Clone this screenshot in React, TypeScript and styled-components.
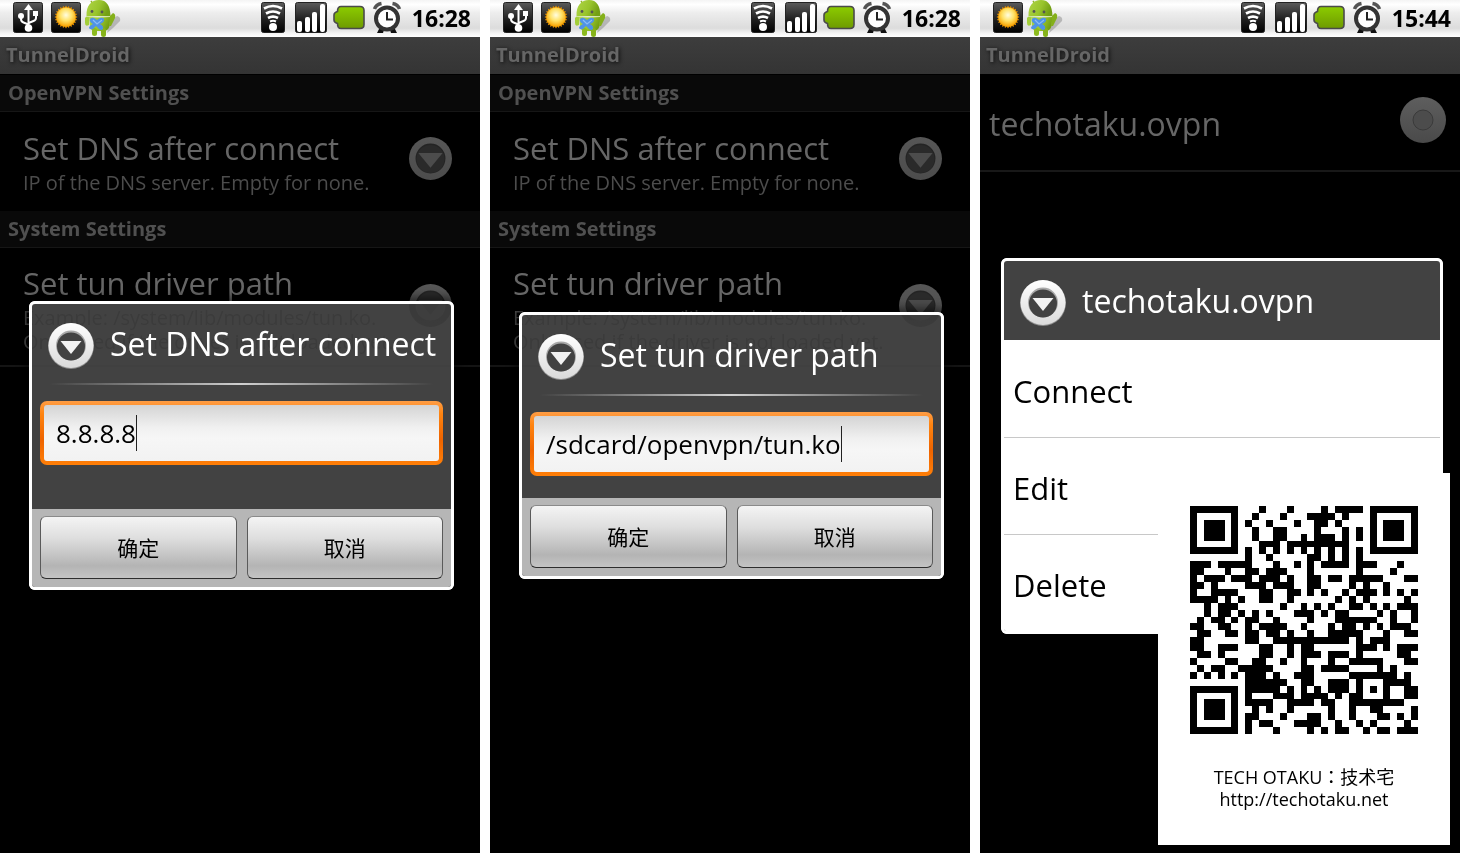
import React, { useId, useState } from 'react';
import styled, { createGlobalStyle } from 'styled-components';

const GlobalStyle = createGlobalStyle`
  * { box-sizing: border-box; }
  body {
    margin: 0;
    background: #fff;
    font-family: 'Open Sans', 'Noto Sans', 'Noto Sans CJK SC', sans-serif;
  }
  button, input { font: inherit; }
  svg { display: block; flex: none; }
`;

/* ---------- layout ---------- */

const Gallery = styled.main`
  display: grid;
  grid-template-columns: repeat(3, minmax(0, 1fr));
  gap: 10px;
  min-height: calc(100vh - 1px);
`;

const Phone = styled.section`
  position: relative;
  display: flex;
  flex-direction: column;
  overflow: hidden;
  background: #000;
`;

const StatusBar = styled.header`
  display: flex;
  justify-content: space-between;
  height: 37px;
  padding: 0 9px 0 13px;
  background: linear-gradient(#f4f4f4 0%, #fff 12%, #ededed 35%, #dcdcdc 76%, #f4f4f4 90%, #fff 100%);
`;

const StatusGroup = styled.div<{ $gap: number }>`
  display: flex;
  gap: ${(p) => p.$gap}px;
`;

const Clock = styled.time`
  font-size: 23px;
  line-height: 37px;
  font-weight: 700;
  color: #000;
`;

const TitleBar = styled.h1`
  margin: 0;
  padding: 0 6px;
  height: 37px;
  background: linear-gradient(#3d3d3d, #343434);
  color: #666;
  font-size: 20px;
  line-height: 36px;
  font-weight: 700;
  text-shadow: 1px 1px 4px rgba(0, 0, 0, 0.8);
`;

const SettingsList = styled.div`
  padding-top: 1px;
`;

const SectionHeader = styled.h2`
  margin: 0;
  padding: 0 8px;
  height: 37px;
  border-bottom: 1px solid #161616;
  background: #090909;
  color: #505050;
  font-size: 20px;
  line-height: 36px;
  font-weight: 700;
`;

const Preference = styled.div<{ $divided?: boolean }>`
  display: flex;
  align-items: center;
  justify-content: space-between;
  padding: ${(p) => (p.$divided ? 15 : 16)}px 28px 11px 23px;
  border-bottom: ${(p) => (p.$divided ? '2px solid #141414' : '5px solid #000')};

  svg { margin-bottom: 6px; }
`;

const PreferenceTitle = styled.h3`
  margin: 0 0 3px;
  color: #666;
  font-size: 31px;
  line-height: 40px;
  font-weight: 400;
`;

const PreferenceSummary = styled.p`
  margin: 0;
  color: #4c4c4c;
  font-size: 20px;
  line-height: 24px;
`;

const ProfileRow = styled.div`
  display: flex;
  align-items: center;
  justify-content: space-between;
  height: 98px;
  padding: 0 14px 4px 9px;
  border-bottom: 2px solid #181818;
`;

const ProfileName = styled.h3`
  margin: 8px 0 0;
  color: #666;
  font-size: 32px;
  line-height: 44px;
  font-weight: 400;
`;

/* ---------- dialog ---------- */

const Overlay = styled.div<{ $left: number; $right: number; $top?: number }>`
  position: absolute;
  inset: 37px 0 0;
  display: flex;
  align-items: center;
  padding: ${(p) => p.$top ?? 0}px ${(p) => p.$right}px 0 ${(p) => p.$left}px;
`;

const DialogFrame = styled.div`
  flex: 1;
  min-width: 0;
  border: 3px solid #fff;
  border-radius: 6px;
  overflow: hidden;
  background: rgba(45, 45, 45, 0.9);
  backdrop-filter: invert(1);
  box-shadow: 0 0 8px 4px rgba(0, 0, 0, 0.5);
`;

const DialogHeader = styled.div<{ $plain?: boolean }>`
  display: flex;
  align-items: center;
  gap: 16px;
  height: ${(p) => (p.$plain ? 79 : 84)}px;
  padding: ${(p) => (p.$plain ? '5px 16px 0' : '0 16px')};
`;

const DialogTitle = styled.h2`
  margin: 0 -8px 4px 0;
  color: #fff;
  font-size: 32px;
  line-height: 44px;
  font-weight: 400;
  white-space: nowrap;
`;

const HeaderRule = styled.hr`
  height: 2px;
  margin: -5px 18px 16px;
  border: 0;
  background: linear-gradient(90deg, transparent, #d0d0d0 50%, transparent);
`;

const Field = styled.label<{ $space: number }>`
  display: flex;
  align-items: center;
  height: 64px;
  margin: 0 8px ${(p) => p.$space}px;
  padding: 0 12px;
  border: 4px solid transparent;
  border-radius: 7px;
  background:
    linear-gradient(#d4d4d4, #f0f0f0 40%, #f6f6f6 60%, #f2f2f2) padding-box,
    linear-gradient(#ff9d45, #ff8410 20%, #ee6400 60%, #ff7f08) border-box;
`;

const FieldInput = styled.input`
  field-sizing: content;
  min-width: 0;
  padding: 0;
  border: 0;
  outline: 0;
  background: none;
  color: #000;
  font-size: 26px;
  line-height: 40px;
`;

const Caret = styled.span`
  width: 1px;
  height: 36px;
  background: #222;
`;

const DialogFooter = styled.div`
  display: grid;
  grid-template-columns: 1fr 1fr;
  gap: 10px;
  padding: 7px 8px 8px;
  background: #b6b6b6;
`;

const DialogButton = styled.button`
  height: 63px;
  padding: 0;
  border: 1px solid #5a5a5a;
  border-top-color: #8a8a8a;
  border-bottom-color: #2e2e2e;
  border-radius: 6px;
  background: linear-gradient(#f4f4f4, #dedede 35%, #b4b4b4 80%, #c4c4c4);
  color: #000;
  font-size: 21px;
`;

const Menu = styled.div`
  display: flex;
  flex-direction: column;
  background: #fff;
`;

const MenuItem = styled.button`
  height: 97px;
  padding: 4px 9px 0;
  border: 0;
  background: #fff;
  color: #000;
  font-size: 31px;
  line-height: 44px;
  text-align: left;

  & + & { border-top: 1px solid #c8c8c8; }
`;

/* ---------- floating card ---------- */

const ContactCard = styled.aside`
  position: absolute;
  right: 10px;
  bottom: 8px;
  width: 292px;
  height: 372px;
  padding: 33px 0 0;
  background: #fff;
  color: #000;
  text-align: center;
  font-family: 'Open Sans', 'Noto Sans CJK JP', sans-serif;
  font-size: 18px;
  line-height: 22px;

  svg { margin: 0 auto 32px; }
  p { margin: 0; }
`;

const CardLink = styled.a`
  color: inherit;
  text-decoration: none;
`;

/* ---------- QR code, version 4-L with mask 0 ---------- */

function buildQr(text: string): boolean[][] {
  const size = 33;
  const dataLength = 80;
  const eccLength = 20;
  const bytes = Array.from(new TextEncoder().encode(text));

  const bits: number[] = [];
  const push = (value: number, length: number) => {
    for (let i = length - 1; i >= 0; i--) bits.push((value >> i) & 1);
  };
  push(4, 4);
  push(bytes.length, 8);
  bytes.forEach((b) => push(b, 8));
  push(0, 4);
  const data: number[] = [];
  for (let i = 0; i < bits.length; i += 8) data.push(parseInt(bits.slice(i, i + 8).join(''), 2));
  for (let pad = 0xec; data.length < dataLength; pad ^= 0xec ^ 0x11) data.push(pad);

  const multiply = (a: number, b: number) => {
    let z = 0;
    for (let i = 7; i >= 0; i--) {
      z = (z << 1) ^ ((z >> 7) * 0x11d);
      z ^= ((b >> i) & 1) * a;
    }
    return z;
  };
  const divisor: number[] = new Array(eccLength).fill(0);
  divisor[eccLength - 1] = 1;
  let root = 1;
  for (let i = 0; i < eccLength; i++) {
    for (let j = 0; j < eccLength; j++) {
      divisor[j] = multiply(divisor[j], root);
      if (j + 1 < eccLength) divisor[j] ^= divisor[j + 1];
    }
    root = multiply(root, 2);
  }
  const ecc: number[] = new Array(eccLength).fill(0);
  data.forEach((b) => {
    const factor = b ^ (ecc.shift() as number);
    ecc.push(0);
    divisor.forEach((c, i) => { ecc[i] ^= multiply(c, factor); });
  });
  const codewords = [...data, ...ecc];

  const grid: boolean[][] = Array.from({ length: size }, () => new Array(size).fill(false));
  const fixed: boolean[][] = Array.from({ length: size }, () => new Array(size).fill(false));
  const set = (row: number, col: number, dark: boolean) => {
    if (row < 0 || col < 0 || row >= size || col >= size) return;
    grid[row][col] = dark;
    fixed[row][col] = true;
  };
  for (let i = 0; i < size; i++) {
    set(6, i, i % 2 === 0);
    set(i, 6, i % 2 === 0);
  }
  [[3, 3], [3, size - 4], [size - 4, 3]].forEach(([r, c]) => {
    for (let y = -4; y <= 4; y++)
      for (let x = -4; x <= 4; x++) {
        const d = Math.max(Math.abs(x), Math.abs(y));
        set(r + y, c + x, d !== 2 && d !== 4);
      }
  });
  for (let y = -2; y <= 2; y++)
    for (let x = -2; x <= 2; x++) set(26 + y, 26 + x, Math.max(Math.abs(x), Math.abs(y)) !== 1);

  const format = 0b111011111000100;
  const bit = (i: number) => ((format >> i) & 1) === 1;
  for (let i = 0; i <= 5; i++) set(i, 8, bit(i));
  set(7, 8, bit(6));
  set(8, 8, bit(7));
  set(8, 7, bit(8));
  for (let i = 9; i < 15; i++) set(8, 14 - i, bit(i));
  for (let i = 0; i < 8; i++) set(8, size - 1 - i, bit(i));
  for (let i = 8; i < 15; i++) set(size - 15 + i, 8, bit(i));
  set(size - 8, 8, true);

  let index = 0;
  for (let right = size - 1; right >= 1; right -= 2) {
    if (right === 6) right = 5;
    const upward = ((right + 1) & 2) === 0;
    for (let v = 0; v < size; v++)
      for (let j = 0; j < 2; j++) {
        const col = right - j;
        const row = upward ? size - 1 - v : v;
        if (fixed[row][col]) continue;
        const dark = index < codewords.length * 8 && ((codewords[index >> 3] >> (7 - (index & 7))) & 1) === 1;
        grid[row][col] = dark !== ((row + col) % 2 === 0);
        index++;
      }
  }
  return grid;
}

function QrCode({ text }: { text: string }) {
  const path = buildQr(text)
    .map((row, y) => row.map((dark, x) => (dark ? `M${x} ${y}h1v1h-1z` : '')).join(''))
    .join('');
  return (
    <svg width="228" height="228" viewBox="0 0 33 33" shapeRendering="crispEdges" role="img" aria-label="QR code">
      <path d={path} fill="#000" />
    </svg>
  );
}

/* ---------- icons ---------- */

function Tile({ id, width }: { id: string; width: number }) {
  return (
    <>
      <defs>
        <linearGradient id={id} x1="0" y1="0" x2="0" y2="1">
          <stop offset="0" stopColor="#5a5a5a" />
          <stop offset="0.6" stopColor="#1c1c1c" />
          <stop offset="1" stopColor="#000" />
        </linearGradient>
      </defs>
      <rect x="0.5" y="2.5" width={width - 1} height="30" rx="2" fill={`url(#${id})`} stroke="#222" />
    </>
  );
}

function UsbIcon() {
  const id = useId();
  return (
    <svg width="30" height="37" viewBox="0 0 30 37">
      <Tile id={id} width={30} />
      <g fill="none" stroke="#fff" strokeWidth="2">
        <path d="M15.5 8v20" />
        <path d="M8 16v3q0 2.500 2.500 3.500l5 2" />
        <path d="M23 14v4q0 2-2.500 3l-5 2" />
      </g>
      <path d="M15.500 4l4.500 6h-9z" fill="#fff" />
      <circle cx="8" cy="16" r="3" fill="#fff" />
      <rect x="20" y="11" width="5" height="5" fill="#fff" />
      <circle cx="15.500" cy="28" r="3.800" fill="#fff" />
    </svg>
  );
}

function SunIcon() {
  const id = useId();
  const rays = Array.from({ length: 48 }, (_, i) => {
    const a = (i * Math.PI) / 24;
    const r = i % 2 ? 9.5 : 11.5;
    return `${15 + r * Math.cos(a)},${17 + r * Math.sin(a)}`;
  }).join(' ');
  return (
    <svg width="30" height="37" viewBox="0 0 30 37">
      <Tile id={id} width={30} />
      <defs>
        <radialGradient id={`${id}s`} cx="0.5" cy="0.4" r="0.6">
          <stop offset="0" stopColor="#fffde0" />
          <stop offset="0.5" stopColor="#ffe36a" />
          <stop offset="1" stopColor="#f7a200" />
        </radialGradient>
      </defs>
      <polygon points={rays} fill="#e89400" />
      <circle cx="15" cy="17" r="9.500" fill={`url(#${id}s)`} />
    </svg>
  );
}

function DroidIcon() {
  const id = useId();
  return (
    <svg width="38" height="37" viewBox="0 0 38 37">
      <defs>
        <linearGradient id={id} x1="0" y1="0" x2="1" y2="0.3">
          <stop offset="0" stopColor="#b0d648" />
          <stop offset="0.6" stopColor="#98c42c" />
          <stop offset="1" stopColor="#739f14" />
        </linearGradient>
      </defs>
      <path d="M25 21l7-5q4 1 3 5l-7 7-6 5z" fill="#8a8a8a" opacity="0.5" />
      <path d="M8 4L6 1" stroke="#8fb52a" strokeWidth="1.500" />
      <path d="M1.500 16C1 6 6 0 14 0s11 6 11.500 16z" fill={`url(#${id})`} />
      <path d="M4 17h21.500l-1 9q-1 5-6 5H9q-4-1-4-5z" fill={`url(#${id})`} />
      <rect x="7" y="28" width="5" height="8" rx="2.500" fill="#8dbb1e" />
      <rect x="16" y="28" width="5" height="9" rx="2.500" fill="#86b31a" />
      <path d="M0 18q2-3 4-1v8q-4 2-4-2z" fill="#a3ce38" />
      <path d="M25 16l3-3q3 1 2 5l-4 8h-2z" fill="#84b01a" />
      <circle cx="7" cy="11.500" r="1.400" fill="#555" />
      <circle cx="17" cy="12" r="1.400" fill="#555" />
      <path d="M2 16.500q11 1.500 23 0" fill="none" stroke="#cfe697" strokeWidth="1" />
      <path d="M5 19q2-2 4-1l3 2 3-2q3-1 4 1 1 3-4 5 4 2 3 5-2 2-4 0l-3-3-3 3q-3 1-4-1 0-2 4-4-4-2-3-5z" fill="#4f93e6" />
      <path d="M8 20l4 4 5-4" fill="none" stroke="#8cbcf5" strokeWidth="1.200" />
    </svg>
  );
}

function WifiIcon() {
  const id = useId();
  return (
    <svg width="28" height="37" viewBox="0 0 28 37">
      <Tile id={id} width={24} />
      <g fill="none" stroke="#fff" strokeWidth="2.600">
        <path d="M3 8.500q9-5 18 0" />
        <path d="M5 13.500q7-4 14 0" />
        <path d="M7 18q5-2.800 10 0" />
        <path d="M9 21.500q3-1.500 6 0" strokeWidth="2" />
      </g>
      <circle cx="12" cy="27" r="4" fill="#fff" />
    </svg>
  );
}

function SignalIcon() {
  const id = useId();
  return (
    <svg width="32" height="37" viewBox="0 0 32 37">
      <Tile id={id} width={32} />
      <g fill="#fff">
        <rect x="2" y="21" width="5" height="11" rx="2" />
        <rect x="10" y="17" width="5" height="15" rx="2" />
        <rect x="17" y="12" width="5" height="20" rx="2" />
        <rect x="25" y="4" width="5" height="28" rx="2" />
      </g>
    </svg>
  );
}

function BatteryIcon() {
  const id = useId();
  return (
    <svg width="32" height="37" viewBox="0 0 32 37">
      <defs>
        <linearGradient id={id} x1="0" y1="0" x2="0" y2="1">
          <stop offset="0" stopColor="#8ccc00" />
          <stop offset="1" stopColor="#6e9a00" />
        </linearGradient>
      </defs>
      <path
        d="M8 6.500h19q4 0 4 4v14q0 4-4 4H8q-3.500 0-3.500-5Q1 22.500 1 20v-5q0-2.500 3.500-3.500 0-5 3.500-5z"
        fill={`url(#${id})`}
        stroke="#4a4a4a"
        strokeWidth="1.600"
      />
    </svg>
  );
}

function AlarmIcon() {
  return (
    <svg width="35" height="37" viewBox="0 0 35 37">
      <g fill="none" stroke="#555" strokeWidth="3.500">
        <path d="M3.500 9Q5 4.500 10.500 3.500" />
        <path d="M28.500 9Q27 4.500 21.500 3.500" />
      </g>
      <path d="M9 27l-3 6h6l1-3zM23 27l3 6h-6l-1-3z" fill="#111" />
      <circle cx="16" cy="18.500" r="11" fill="#fff" stroke="#333" strokeWidth="4" />
      <path d="M16 12v7.500h6" fill="none" stroke="#222" strokeWidth="2" />
    </svg>
  );
}

function ArrowBadge({ size, dim }: { size: number; dim?: boolean }) {
  const id = useId();
  return (
    <svg width={size} height={size} viewBox="0 0 46 46">
      <defs>
        <linearGradient id={id} x1="0" y1="0" x2="0" y2="1">
          <stop offset="0" stopColor={dim ? '#565656' : '#fff'} />
          <stop offset="1" stopColor={dim ? '#4c4c4c' : '#dadada'} />
        </linearGradient>
      </defs>
      {!dim && <circle cx="23" cy="23" r="23" fill="#8c8c8c" />}
      <circle cx="23" cy={dim ? 23 : 22.5} r={dim ? 23 : 22.5} fill={`url(#${id})`} />
      <circle cx="23" cy={dim ? 23 : 22.5} r={dim ? 16 : 15} fill={dim ? '#242424' : '#a8a8a8'} />
      <circle cx="23" cy="23.500" r={dim ? 15 : 14} fill={dim ? '#2a2a2a' : '#424242'} />
      <path d={dim ? 'M10 17h26L23 33z' : 'M12.500 18h21L23 31z'} fill={dim ? '#4c4c4c' : '#f2f2f2'} />
    </svg>
  );
}

function RadioBadge() {
  const id = useId();
  return (
    <svg width="46" height="46" viewBox="0 0 46 46">
      <defs>
        <linearGradient id={id} x1="0" y1="0" x2="0" y2="1">
          <stop offset="0" stopColor="#5e5e5e" />
          <stop offset="1" stopColor="#4a4a4a" />
        </linearGradient>
      </defs>
      <circle cx="23" cy="23" r="23" fill={`url(#${id})`} />
      <circle cx="23" cy="23" r="10" fill="#4c4c4c" stroke="#3a3a3a" strokeWidth="1" />
    </svg>
  );
}

/* ---------- screens ---------- */

function Status({ time, usb }: { time: string; usb?: boolean }) {
  return (
    <StatusBar>
      <StatusGroup $gap={8}>
        {usb && <UsbIcon />}
        <StatusGroup $gap={4}>
          <SunIcon />
          <DroidIcon />
        </StatusGroup>
      </StatusGroup>
      <StatusGroup $gap={6}>
        <WifiIcon />
        <SignalIcon />
        <BatteryIcon />
        <AlarmIcon />
        <Clock>{time}</Clock>
      </StatusGroup>
    </StatusBar>
  );
}

interface SettingsProps {
  title: string;
  initial: string;
  space: number;
}

function SettingsScreen({ title, initial, space }: SettingsProps) {
  const [value, setValue] = useState(initial);
  return (
    <Phone>
      <Status time="16:28" usb />
      <TitleBar>TunnelDroid</TitleBar>
      <SettingsList>
        <SectionHeader>OpenVPN Settings</SectionHeader>
        <Preference>
          <div>
            <PreferenceTitle>Set DNS after connect</PreferenceTitle>
            <PreferenceSummary>IP of the DNS server. Empty for none.</PreferenceSummary>
          </div>
          <ArrowBadge size={43} dim />
        </Preference>
        <SectionHeader>System Settings</SectionHeader>
        <Preference $divided>
          <div>
            <PreferenceTitle>Set tun driver path</PreferenceTitle>
            <PreferenceSummary>
              Example: /system/lib/modules/tun.ko.
              <br />
              Only used if the driver is not loaded yet.
            </PreferenceSummary>
          </div>
          <ArrowBadge size={43} dim />
        </Preference>
      </SettingsList>
      <Overlay $left={29} $right={26}>
        <DialogFrame role="dialog" aria-label={title}>
          <DialogHeader>
            <ArrowBadge size={46} />
            <DialogTitle>{title}</DialogTitle>
          </DialogHeader>
          <HeaderRule />
          <Field $space={space}>
            <FieldInput aria-label={title} value={value} onChange={(e) => setValue(e.target.value)} />
            <Caret />
          </Field>
          <DialogFooter>
            <DialogButton type="button">确定</DialogButton>
            <DialogButton type="button">取消</DialogButton>
          </DialogFooter>
        </DialogFrame>
      </Overlay>
    </Phone>
  );
}

function ProfilesScreen() {
  return (
    <Phone>
      <Status time="15:44" />
      <TitleBar>TunnelDroid</TitleBar>
      <ProfileRow>
        <ProfileName>techotaku.ovpn</ProfileName>
        <RadioBadge />
      </ProfileRow>
      <Overlay $left={21} $right={17} $top={2}>
        <DialogFrame role="dialog" aria-label="techotaku.ovpn">
          <DialogHeader $plain>
            <ArrowBadge size={46} />
            <DialogTitle>techotaku.ovpn</DialogTitle>
          </DialogHeader>
          <Menu>
            <MenuItem type="button">Connect</MenuItem>
            <MenuItem type="button">Edit</MenuItem>
            <MenuItem type="button">Delete</MenuItem>
          </Menu>
        </DialogFrame>
      </Overlay>
      <ContactCard>
        <QrCode text="MECARD:N:TECH OTAKU：技术宅;URL:http://techotaku.net;;" />
        <p>TECH OTAKU：技术宅</p>
        <CardLink href="http://techotaku.net">http://techotaku.net</CardLink>
      </ContactCard>
    </Phone>
  );
}

export default function App() {
  return (
    <>
      <GlobalStyle />
      <Gallery>
        <SettingsScreen title="Set DNS after connect" initial="8.8.8.8" space={44} />
        <SettingsScreen title="Set tun driver path" initial="/sdcard/openvpn/tun.ko" space={22} />
        <ProfilesScreen />
      </Gallery>
    </>
  );
}
